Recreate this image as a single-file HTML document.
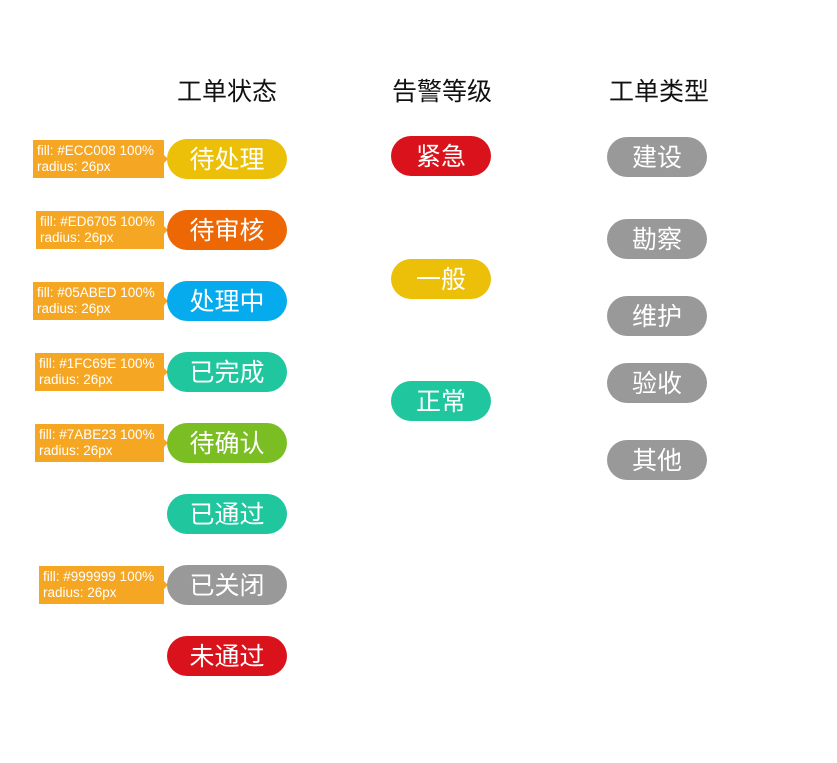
<!DOCTYPE html>
<html><head><meta charset="utf-8"><style>
body{margin:0;width:837px;height:763px;background:#fff;position:relative;font-family:"Liberation Sans","Noto Sans CJK SC",sans-serif;overflow:hidden}
.h{position:absolute;top:75px;font-size:25px;color:#111;width:140px;text-align:center;line-height:34px}
.p{position:absolute;width:120px;height:40px;border-radius:20px;color:#fff;font-size:25px;line-height:43px;text-align:center}
.m{width:100px}
.l{position:absolute;background:#F5A623;color:#fff;font-size:13.5px;line-height:16px;height:38px;box-sizing:border-box;padding:3px 0 0 4px;right:673px;white-space:nowrap}
.l:after{content:"";position:absolute;right:-4px;top:15px;border-left:4px solid #F5A623;border-top:4px solid transparent;border-bottom:4px solid transparent}
</style></head><body>
<div class="h" style="left:157px">工单状态</div>
<div class="h" style="left:372px">告警等级</div>
<div class="h" style="left:589px">工单类型</div>

<div class="l" style="top:140px;width:131px">fill: #ECC008 100%<br>radius: 26px</div>
<div class="l" style="top:211px;width:128px">fill: #ED6705 100%<br>radius: 26px</div>
<div class="l" style="top:282px;width:131px">fill: #05ABED 100%<br>radius: 26px</div>
<div class="l" style="top:353px;width:129px">fill: #1FC69E 100%<br>radius: 26px</div>
<div class="l" style="top:424px;width:129px">fill: #7ABE23 100%<br>radius: 26px</div>
<div class="l" style="top:566px;width:125px">fill: #999999 100%<br>radius: 26px</div>

<div class="p" style="left:167px;top:139px;background:#ECC008">待处理</div>
<div class="p" style="left:167px;top:210px;background:#ED6705">待审核</div>
<div class="p" style="left:167px;top:281px;background:#05ABED">处理中</div>
<div class="p" style="left:167px;top:352px;background:#1FC69E">已完成</div>
<div class="p" style="left:167px;top:423px;background:#7ABE23">待确认</div>
<div class="p" style="left:167px;top:494px;background:#1FC69E">已通过</div>
<div class="p" style="left:167px;top:565px;background:#999">已关闭</div>
<div class="p" style="left:167px;top:636px;background:#D9121C">未通过</div>

<div class="p m" style="left:391px;top:136px;background:#D9121C">紧急</div>
<div class="p m" style="left:391px;top:259px;background:#ECC008">一般</div>
<div class="p m" style="left:391px;top:381px;background:#1FC69E">正常</div>

<div class="p m" style="left:607px;top:137px;background:#999">建设</div>
<div class="p m" style="left:607px;top:219px;background:#999">勘察</div>
<div class="p m" style="left:607px;top:296px;background:#999">维护</div>
<div class="p m" style="left:607px;top:363px;background:#999">验收</div>
<div class="p m" style="left:607px;top:440px;background:#999">其他</div>
</body></html>
